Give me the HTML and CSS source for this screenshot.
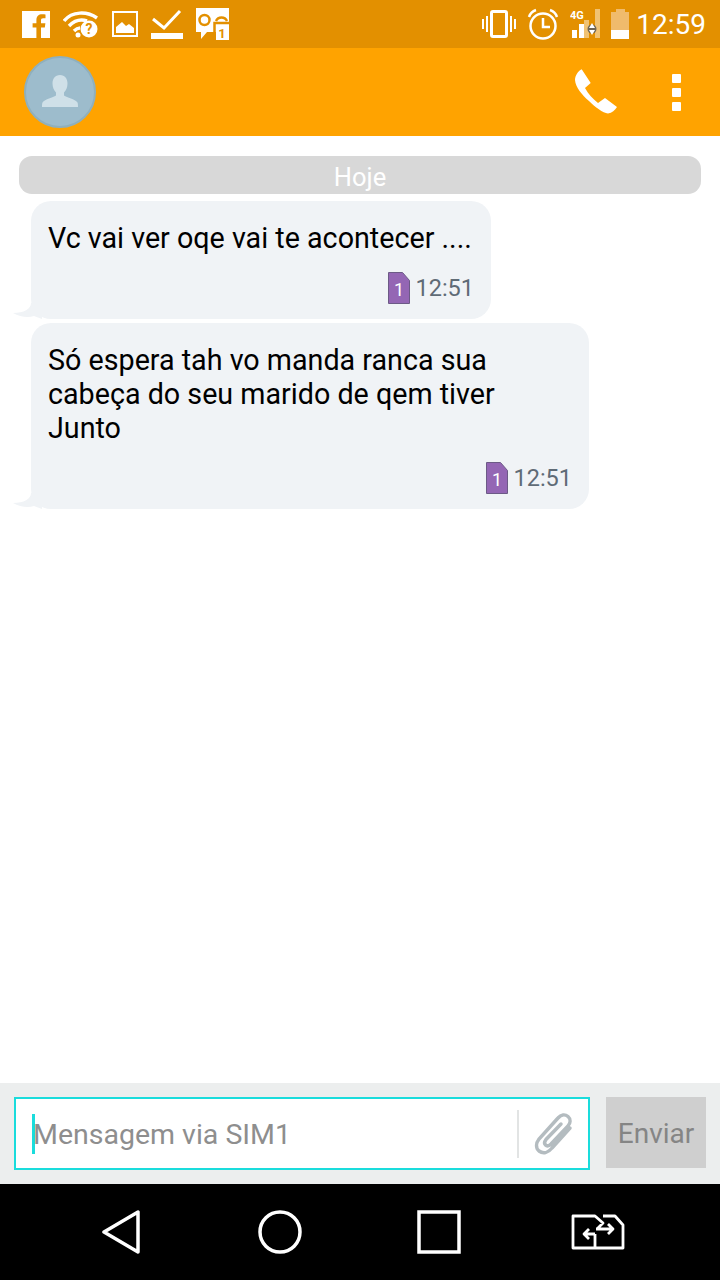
FILE: index.html
```html
<!DOCTYPE html>
<html lang="pt">

<head>
  <meta charset="UTF-8">
  <meta name="viewport" content="width=device-width, initial-scale=1.0">
  <title>Mensagens</title>
  <link rel="stylesheet" href="styles.css">
</head>

<body>
  <div class="screen">
    <div class="status-bar">
      <div class="status-left">
        <svg width="28" height="28" viewBox="0 0 28 28"><path fill="#fff" d="M0 1h28v27H19V17.500h3.800l.6-4.300H19v-2.800c0-1.300.4-2.100 2.200-2.100h2.300V4.400c-.4-.1-1.800-.2-3.400-.2-3.400 0-5.700 2-5.700 5.800v3.200h-3.800v4.300h3.800V28H0z"/></svg>
        <svg width="36" height="28" viewBox="0 0 36 28"><g fill="none" stroke="#fff" stroke-width="3.500"><path d="M1 11C9 1 24 1 34 8"/><path d="M6 16c6-6 12-7 18-5"/><path d="M11 21c2.500-2.500 4-3 6-3"/></g><circle cx="15" cy="25" r="2.500" fill="#fff"/><circle cx="26" cy="19" r="8.500" fill="#fff"/><text x="26" y="24" class="wifi-mark">?</text></svg>
        <svg width="26" height="26" viewBox="0 0 26 26"><rect x="1" y="1" width="24" height="24" fill="none" stroke="#fff" stroke-width="2"/><path fill="#fff" d="M4 22v-6l6-5 4 4 3-2 5 4v5z"/></svg>
        <svg width="32" height="30" viewBox="0 0 32 30"><path fill="none" stroke="#fff" stroke-width="3" d="M2 10l11 9L29 2"/><rect y="24" width="32" height="6" fill="#fff"/></svg>
        <svg width="34" height="32" viewBox="0 0 34 32"><path fill="#fff" d="M0 0H33V32H20V24H11L5 31V24H0Z"/><circle cx="8.500" cy="12" r="5" fill="none" stroke="#e39000" stroke-width="2.500"/><path fill="none" stroke="#e39000" stroke-width="2.500" d="M18.500 32V15H33M20 13a6 6 0 0 1 11 0"/><text x="26" y="30" class="sim-mark">1</text></svg>
      </div>
      <div class="status-right">
        <svg width="34" height="28" viewBox="0 0 34 28"><rect x="9.500" y="1.500" width="15" height="25" rx="1.500" fill="none" stroke="#fff" stroke-width="3"/><path fill="#fff" d="M0 9h2v10H0zM4 6h2v16H4zM28 6h2v16h-2zM32 9h2v10h-2z"/></svg>
        <svg width="32" height="32" viewBox="0 0 32 32"><circle cx="16" cy="18" r="12.500" fill="none" stroke="#fff" stroke-width="2.500"/><path fill="none" stroke="#fff" stroke-width="2.500" d="M16 10v9h7M2 9c1-3 4-6 7-7M30 9c-1-3-4-6-7-7"/></svg>
        <svg width="30" height="30" viewBox="0 0 30 30"><text x="0" y="10" class="net-mark">4G</text><path fill="#fff" d="M2 21h5v8H2zM9 15h5v14H9z"/><path fill="#fff" fill-opacity=".45" d="M14 11h5v18h-5zM25 0h5v29h-5z"/><circle cx="22" cy="20" r="4.500" fill="#6f6553"/><path fill="#fff" d="M22 14l3 5h-6zM22 26l3-5h-6z"/></svg>
        <div class="battery"><div class="battery-cap"></div><div class="battery-body"><div class="battery-fill"></div></div></div>
        <span class="clock">12:59</span>
      </div>
    </div>

    <div class="app-bar">
      <div class="avatar">
        <svg width="36" height="32" viewBox="0 0 36 32"><path fill="#cfe0e8" d="M18 0c5 0 7.500 4 7.500 8.500 0 4-1.500 7-3.500 9v3c3 2 11 3.500 13.500 7 .4.800.5 2.200.5 4.500H0c0-2.300.1-3.700.5-4.500 2.500-3.500 10.500-5 13.500-7v-3c-2-2-3.500-5-3.500-9C10.500 4 13 0 18 0z"/></svg>
      </div>
      <div class="app-actions">
        <svg width="44" height="46" viewBox="0 0 44 46"><path fill="#fff" d="M6.700.300L15.700 14 10 19C13 25 18 30 23 34L30 29 42 38C40 41 37 44 33 44.500 28 44 20 38 14 32 7 26 .500 18 0 11 0 7 3 2 6.700.300Z"/></svg>
        <div class="menu-dots"><span></span><span></span><span></span></div>
      </div>
    </div>

    <div class="chat">
      <div class="date-pill">Hoje</div>

      <div class="bubble bubble-short">
        <svg class="tail" width="30" height="16" viewBox="0 0 30 16"><path fill="#f0f3f6" d="M19 0C19 6 12 10 1 10 8 14 16 15 22 13L30 16V0Z"/></svg>
        <p class="bubble-text">Vc vai ver oqe vai te acontecer ....</p>
        <div class="bubble-meta">
          <svg width="22" height="32" viewBox="0 0 22 32"><path fill="#9466b4" stroke="#6c5a86" stroke-width="1" d="M.5.500h14l7 8v23H.5z"/><text x="11" y="24" class="sim-num">1</text></svg>
          <span>12:51</span>
        </div>
      </div>

      <div class="bubble bubble-long">
        <svg class="tail" width="30" height="16" viewBox="0 0 30 16"><path fill="#f0f3f6" d="M19 0C19 6 12 10 1 10 8 14 16 15 22 13L30 16V0Z"/></svg>
        <p class="bubble-text">Só espera tah vo manda ranca sua<br>cabeça do seu marido de qem tiver<br>Junto</p>
        <div class="bubble-meta">
          <svg width="22" height="32" viewBox="0 0 22 32"><path fill="#9466b4" stroke="#6c5a86" stroke-width="1" d="M.5.500h14l7 8v23H.5z"/><text x="11" y="24" class="sim-num">1</text></svg>
          <span>12:51</span>
        </div>
      </div>
    </div>

    <div class="composer">
      <div class="input-box">
        <div class="caret"></div>
        <span class="placeholder">Mensagem via SIM1</span>
        <div class="input-divider"></div>
        <svg width="40" height="44" viewBox="0 0 40 44"><path fill="none" stroke="#b4bcc0" stroke-width="3.500" stroke-linecap="round" d="M36 16L18 36c-4 5-9 6-13 3-3.500-3-3-8 0-12L24 6c3-3.500 7-4 10-1.500 3 2.500 2.500 6.500 0 9.500L17 32c-2 2-4 2.500-5.500 1-1.500-1.500-1-3.500.5-5.500L27 12"/></svg>
      </div>
      <div class="send-btn">Enviar</div>
    </div>

    <div class="nav-bar">
      <svg width="40" height="44" viewBox="0 0 40 44"><path fill="none" stroke="#fff" stroke-width="3.500" stroke-linejoin="round" d="M37 2v40L3 22z"/></svg>
      <svg width="44" height="44" viewBox="0 0 44 44"><circle cx="22" cy="22" r="20" fill="none" stroke="#fff" stroke-width="3.500"/></svg>
      <svg width="44" height="44" viewBox="0 0 44 44"><rect x="2" y="2" width="40" height="40" fill="none" stroke="#fff" stroke-width="3.500"/></svg>
      <svg width="54" height="36" viewBox="0 0 54 36"><path fill="none" stroke="#fff" stroke-width="2.800" stroke-linejoin="round" d="M24 34H2V2H24L32 9 26 15M24 20V34H52V11L44 2H32M25 15H42M37 10l5 5-5 5M24 20H13M18 15l-5 5 5 5"/></svg>
    </div>
  </div>
</body>

</html>
```

FILE: styles.css
```css
* {
  box-sizing: border-box;
}

body {
  margin: 0;
  font-family: Roboto, "Noto Sans", sans-serif;
  background: #fff;
}

svg {
  display: block;
  flex: none;
}

.screen {
  width: 720px;
  height: 1280px;
  display: flex;
  flex-direction: column;
  overflow: hidden;
}

/* status bar */
.status-bar {
  height: 48px;
  flex: none;
  background: #e39000;
  display: flex;
  justify-content: space-between;
  align-items: center;
  padding: 0 14px 0 22px;
}

.status-left {
  display: flex;
  align-items: center;
  gap: 13px;
}

.status-right {
  display: flex;
  align-items: center;
  gap: 11px;
}

.wifi-mark {
  font: 700 14px Roboto, sans-serif;
  fill: #e39000;
  text-anchor: middle;
}

.sim-mark {
  font: 700 13px Roboto, sans-serif;
  fill: #e39000;
  text-anchor: middle;
}

.net-mark {
  font: 700 11px Roboto, sans-serif;
  fill: #fff;
}

.battery {
  width: 18px;
  display: flex;
  flex-direction: column;
  align-items: center;
}

.battery-cap {
  width: 9px;
  height: 3px;
  background: #f0bb6c;
}

.battery-body {
  width: 18px;
  height: 27px;
  background: #f0bb6c;
  display: flex;
  align-items: flex-end;
}

.battery-fill {
  width: 100%;
  height: 9px;
  background: #fff;
}

.clock {
  color: #fff;
  font-size: 28px;
  margin-left: -4px;
}

/* app bar */
.app-bar {
  height: 88px;
  flex: none;
  background: #ffa300;
  display: flex;
  justify-content: space-between;
  align-items: center;
  padding: 0 39px 0 24px;
}

.avatar {
  width: 72px;
  height: 72px;
  border-radius: 50%;
  background: #9dbccc;
  border: 2px solid #8fb0bd;
  display: flex;
  align-items: flex-end;
  justify-content: center;
  padding-bottom: 19px;
}

.app-actions {
  display: flex;
  align-items: center;
  gap: 53px;
}

.menu-dots {
  display: flex;
  flex-direction: column;
  gap: 5px;
}

.menu-dots span {
  width: 9px;
  height: 9px;
  background: #fff;
  border-radius: 1px;
}

/* chat */
.chat {
  flex: 1;
  background: #fff;
  padding: 20px 19px 0;
  display: flex;
  flex-direction: column;
  align-items: flex-start;
}

.date-pill {
  width: 100%;
  height: 38px;
  border-radius: 13px;
  background: #d8d8d8;
  color: #fff;
  font-size: 25.5px;
  line-height: 42px;
  text-align: center;
  margin-bottom: 7px;
}

.bubble {
  position: relative;
  margin-left: 12px;
  margin-bottom: 4px;
  background: #f0f3f6;
  border-radius: 20px;
  padding: 20px 18px 14px 17px;
}

.bubble-short {
  width: 460px;
  height: 118px;
}

.bubble-long {
  width: 558px;
  height: 186px;
}

.tail {
  position: absolute;
  left: -19px;
  bottom: 0;
}

.bubble-text {
  margin: 0;
  font-size: 28.7px;
  line-height: 34px;
  color: #000;
  white-space: nowrap;
}

.bubble-meta {
  position: absolute;
  right: 17px;
  bottom: 15px;
  display: flex;
  align-items: center;
  gap: 5px;
  font-size: 23.5px;
  color: #5f6b76;
}

.sim-num {
  font: 400 18px Roboto, sans-serif;
  fill: #fff;
  text-anchor: middle;
}

/* composer */
.composer {
  height: 101px;
  flex: none;
  background: #eceeee;
  display: flex;
  align-items: flex-start;
  padding: 14px 14px 0;
  gap: 16px;
}

.input-box {
  width: 576px;
  height: 73px;
  background: #fff;
  border: 2px solid #1adcdc;
  display: flex;
  align-items: center;
  padding: 0 14px 0 16px;
}

.caret {
  width: 3px;
  height: 40px;
  background: #1adcdc;
  margin-right: -2px;
}

.placeholder {
  flex: 1;
  font-size: 28.5px;
  line-height: 36px;
  padding-top: 2px;
  color: #8e8e8e;
}

.input-divider {
  width: 2px;
  height: 48px;
  background: #e2e4e4;
  margin-right: 15px;
}

.send-btn {
  width: 100px;
  height: 71px;
  background: #cfcfcf;
  color: #858585;
  font-size: 28px;
  line-height: 73px;
  text-align: center;
}

/* nav bar */
.nav-bar {
  height: 96px;
  flex: none;
  background: #000;
  display: grid;
  grid-template-columns: 157px 159px 154px auto;
  align-items: center;
  padding-left: 101px;
}
```
